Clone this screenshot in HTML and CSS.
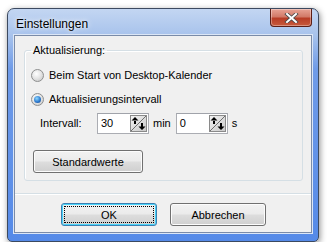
FILE: index.html
```html
<!DOCTYPE html>
<html lang="de">
<head>
  <meta charset="UTF-8">
  <title>Einstellungen</title>
  <link rel="stylesheet" href="styles.css">
</head>
<body>
<div class="window">
  <div class="window_top">
    <span class="title">Einstellungen</span>
    <span class="close" title="Schließen">
      <svg width="17" height="10" viewBox="0 0 17 10">
        <path d="M4 1 L13 9 M13 1 L4 9" stroke="#4a4a4a" stroke-width="3.6" stroke-linecap="square"/>
        <path d="M4 1 L13 9 M13 1 L4 9" stroke="#fff" stroke-width="2" stroke-linecap="square"/>
      </svg>
    </span>
  </div>
  <div class="window_main">
    <fieldset class="group">
      <legend>Aktualisierung:</legend>
      <label class="radio_row">
        <span class="radio"></span>
        Beim Start von Desktop-Kalender
      </label>
      <label class="radio_row">
        <span class="radio checked"></span>
        Aktualisierungsintervall
      </label>
      <div class="interval_row">
        <span class="interval_label">Intervall:</span>
        <span class="spin">
          <span class="spin_value">30</span>
          <span class="spin_btn">
            <svg width="17" height="17" viewBox="0 0 17 17">
              <defs>
                <linearGradient id="sg1" x1="0" y1="0" x2="1" y2="1">
                  <stop offset="0" stop-color="#f4f4f4"/>
                  <stop offset="1" stop-color="#c8c8c8"/>
                </linearGradient>
              </defs>
              <rect x="0.5" y="0.5" width="16" height="16" fill="url(#sg1)" stroke="#8a8a8a"/>
              <path d="M16 1 L1 16" stroke="#6e6e6e" stroke-width="1"/>
              <path d="M5 2 L1.5 5.5 L8.5 5.5 Z M4 5 h2 v4 h-2 Z" fill="#000"/>
              <path d="M12 15 L8.5 11.5 L15.5 11.5 Z M11 8 h2 v4 h-2 Z" fill="#000"/>
            </svg>
          </span>
        </span>
        <span class="unit">min</span>
        <span class="spin">
          <span class="spin_value">0</span>
          <span class="spin_btn">
            <svg width="17" height="17" viewBox="0 0 17 17">
              <rect x="0.5" y="0.5" width="16" height="16" fill="url(#sg1)" stroke="#8a8a8a"/>
              <path d="M16 1 L1 16" stroke="#6e6e6e" stroke-width="1"/>
              <path d="M5 2 L1.5 5.5 L8.5 5.5 Z M4 5 h2 v4 h-2 Z" fill="#000"/>
              <path d="M12 15 L8.5 11.5 L15.5 11.5 Z M11 8 h2 v4 h-2 Z" fill="#000"/>
            </svg>
          </span>
        </span>
        <span class="unit">s</span>
      </div>
      <button class="btn btn_defaults">Standardwerte</button>
    </fieldset>
    <div class="separator"></div>
    <div class="buttons">
      <button class="btn btn_default">OK</button>
      <button class="btn">Abbrechen</button>
    </div>
  </div>
</div>
</body>
</html>
```

FILE: styles.css
```css
body {
  margin: 0;
  background: #ffffff;
  font-family: "Liberation Sans", Arial, sans-serif;
  font-size: 11px;
  color: #000000;
}

.window {
  width: 312px;
  height: 234px;
  margin: 8px 0 0 7px;
  box-sizing: border-box;
  border: 1px solid #3c4a60;
  border-radius: 7px 7px 5px 5px;
  padding: 0 6px 8px 6px;
  background: linear-gradient(to bottom, #c3d6f2 0px, #a8c3ec 26px, #6f9be8 60px, #558ae8 100%);
  box-shadow: 1px 2px 6px rgba(0, 0, 0, 0.45);
  display: flex;
  flex-direction: column;
}

.window_top {
  height: 26px;
  display: flex;
  justify-content: space-between;
  align-items: flex-start;
}

.title {
  margin: 8px 0 0 2px;
  font-size: 12px;
  color: #000000;
  text-shadow: 0 0 6px #ffffff, 0 0 3px #e8f0fb;
}

.close {
  width: 42px;
  height: 18px;
  margin-right: 0;
  box-sizing: border-box;
  border: 1px solid #5c1e16;
  border-top: none;
  border-radius: 0 0 4px 4px;
  background: linear-gradient(to bottom, #e8a395 0%, #d27a68 45%, #b83d26 55%, #c75a3c 100%);
  box-shadow: inset 0 0 0 1px rgba(255, 255, 255, 0.35);
  display: flex;
  align-items: center;
  justify-content: center;
}

.window_main {
  flex: 1;
  background: #f0f0f0;
  border: 1px solid #7a8ba8;
  box-shadow: 0 0 0 1px #dbe6f6;
  display: flex;
  flex-direction: column;
  padding: 8px 0 0 0;
}

.group {
  margin: 0 8px 0 9px;
  padding: 7px 8px 9px 8px;
  height: 137px;
  box-sizing: border-box;
  border: 1px solid #d5dfe5;
  border-radius: 3px;
  box-shadow: inset 1px 1px 0 #ffffff;
}

.group legend {
  padding: 0 2px;
  margin-left: -2px;
  color: #000000;
}

.radio_row {
  display: flex;
  align-items: center;
  gap: 5px;
  height: 24px;
  margin-left: -2px;
}

.radio {
  width: 11px;
  height: 11px;
  border-radius: 50%;
  border: 1px solid #8e8f8f;
  background: radial-gradient(circle at 40% 35%, #ffffff 0%, #e6e6e6 45%, #c2c2c2 100%);
  position: relative;
}

.radio.checked::after {
  content: "";
  position: absolute;
  left: 2px;
  top: 2px;
  width: 7px;
  height: 7px;
  border-radius: 50%;
  background: radial-gradient(circle at 40% 35%, #8fd8ff 0%, #2f7ccf 55%, #0e3f87 100%);
}

.interval_row {
  display: flex;
  align-items: center;
  height: 24px;
  margin-left: 7px;
}

.interval_label {
  width: 57px;
}

.spin {
  width: 52px;
  height: 21px;
  box-sizing: border-box;
  border: 1px solid #abadb3;
  border-top-color: #a0a3aa;
  background: #ffffff;
  display: flex;
  align-items: center;
  justify-content: space-between;
  padding: 0 1px 0 3px;
}

.spin_btn {
  display: flex;
}

.unit {
  margin: 0 5px 0 4px;
}

.btn {
  font-family: "Liberation Sans", Arial, sans-serif;
  font-size: 11px;
  height: 23px;
  border: 1px solid #707070;
  border-radius: 3px;
  background: linear-gradient(to bottom, #f2f2f2 0%, #ebebeb 48%, #dddddd 52%, #cfcfcf 100%);
  box-shadow: inset 0 0 0 1px #fcfcfc;
  color: #000000;
  padding: 0;
}

.btn_defaults {
  width: 110px;
  margin-top: 15px;
}

.separator {
  margin-top: 12px;
  border-top: 1px solid #d5dfe5;
  border-bottom: 1px solid #ffffff;
}

.buttons {
  display: flex;
  gap: 13px;
  margin: 8px 0 0 46px;
}

.buttons .btn {
  width: 96px;
}

.btn_default {
  border-color: #3c7fb1;
  box-shadow: inset 0 0 0 1px #48d4fa;
  outline: 1px dotted #000000;
  outline-offset: -4px;
}
```
